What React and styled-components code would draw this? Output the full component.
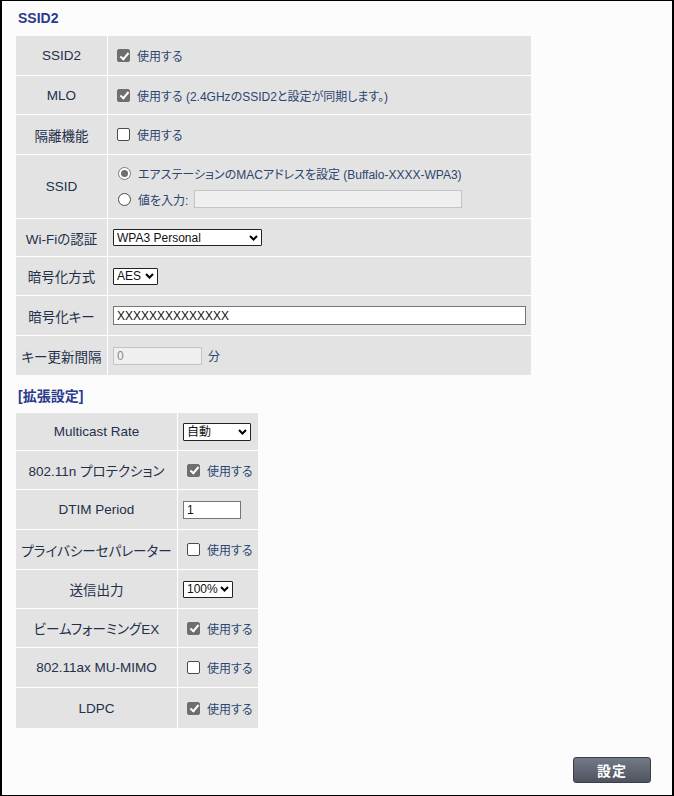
import React from 'react';
import styled, { createGlobalStyle } from 'styled-components';

const Global = createGlobalStyle`
  html, body { margin: 0; padding: 0; background: #fcfcfc; }
  body {
    font-family: "Liberation Sans", "Noto Sans CJK JP", sans-serif;
    font-feature-settings: "palt";
  }
`;

const Frame = styled.div`
  box-sizing: border-box;
  min-height: 796px;
  width: 674px;
  border: 1px solid #000;
  border-left-width: 2px;
  border-right-width: 2px;
  background: #fcfcfc;
  padding: 8px 19px 12px 14px;
`;

const Heading = styled.h2`
  margin: ${p => p.$top || 0}px 0 ${p => p.$bottom || 0}px 2px;
  font-size: 14px;
  line-height: 18px;
  font-weight: bold;
  color: #2a3b8c;
`;

const Table = styled.table`
  width: ${p => p.$width}px;
  border-collapse: separate;
  border-spacing: 0;
  background: #e3e3e3;
`;

const Label = styled.td`
  box-sizing: border-box;
  width: ${p => p.$width}px;
  height: ${p => p.$height || 40}px;
  border-right: 1px solid #fff;
  border-bottom: 1px solid #fff;
  text-align: center;
  vertical-align: middle;
  font-size: 13.5px;
  font-weight: normal;
  color: #23304a;
  padding: 0;
  white-space: nowrap;
  tr:last-child > & { border-bottom: none; }
`;

const Value = styled.td`
  border-bottom: 1px solid #fff;
  padding: 0 5px;
  vertical-align: middle;
  font-size: 12px;
  color: #2c4670;
  tr:last-child > & { border-bottom: none; }
`;

const Line = styled.div`
  display: flex;
  align-items: center;
  gap: 6px;
  white-space: nowrap;
`;

const Stack = styled.div`
  display: flex;
  flex-direction: column;
  gap: 8px;
`;

const Check = styled.input.attrs({ type: 'checkbox', readOnly: true })`
  appearance: none;
  position: relative;
  box-sizing: border-box;
  width: 13px;
  height: 13px;
  margin: 0 1px 0 4px;
  border-radius: 2px;
  border: 1px solid ${p => (p.checked ? '#6e6e6e' : '#4a4a4a')};
  background: ${p => (p.checked ? '#6e6e6e' : '#fff')};
  flex: none;
  &::after {
    content: '';
    display: ${p => (p.checked ? 'block' : 'none')};
    position: absolute;
    left: 3.5px;
    top: 0.5px;
    width: 3px;
    height: 7px;
    border: solid #fff;
    border-width: 0 2px 2px 0;
    transform: rotate(40deg);
  }
`;

const Radio = styled.input.attrs({ type: 'radio', readOnly: true })`
  appearance: none;
  position: relative;
  box-sizing: border-box;
  width: 13px;
  height: 13px;
  margin: 0 1px 0 5px;
  border-radius: 50%;
  border: 1px solid ${p => (p.checked ? '#7a7a7a' : '#4a4a4a')};
  background: #fff;
  flex: none;
  &::after {
    content: '';
    display: ${p => (p.checked ? 'block' : 'none')};
    position: absolute;
    left: 2px;
    top: 2px;
    width: 7px;
    height: 7px;
    border-radius: 50%;
    background: #6e6e6e;
  }
`;

const Text = styled.input.attrs({ type: 'text', readOnly: true })`
  box-sizing: border-box;
  width: ${p => p.$width}px;
  height: ${p => p.$height || 18}px;
  margin: 0;
  padding: 0 3px;
  font: 12px "Liberation Sans", sans-serif;
  color: ${p => (p.disabled ? '#8a8a8a' : '#111')};
  background: ${p => (p.disabled ? '#efefef' : '#fff')};
  border: 1px solid ${p => (p.disabled ? '#c4c4c4' : '#767676')};
  outline: none;
`;

const SelectBox = styled.span`
  position: relative;
  display: inline-flex;
  width: ${p => p.$width}px;
`;

const SelectField = styled.select`
  box-sizing: border-box;
  appearance: none;
  width: 100%;
  height: ${p => p.$height || 17}px;
  margin: 0;
  padding: 0 0 0 3px;
  font: 12px "Liberation Sans", "Noto Sans CJK JP", sans-serif;
  color: #111;
  background: #fff;
  border: 1px solid #222;
  border-radius: 1px;
  outline: none;
`;

const Chevron = styled.svg`
  position: absolute;
  right: 4px;
  top: 50%;
  margin-top: -3px;
  pointer-events: none;
`;

const Select = ({ width, height, value }) => (
  <SelectBox $width={width}>
    <SelectField $height={height} value={value} onChange={() => {}}>
      <option>{value}</option>
    </SelectField>
    <Chevron width="9" height="6" viewBox="0 0 9 6">
      <path d="M1 1 L4.5 4.5 L8 1" fill="none" stroke="#000" strokeWidth="2" />
    </Chevron>
  </SelectBox>
);

const Footer = styled.div`
  display: flex;
  justify-content: flex-end;
  margin-top: 29px;
  padding-right: 2px;
`;

const Button = styled.button`
  width: 78px;
  height: 26px;
  border: 1px solid #3c3f47;
  border-radius: 3px;
  background: linear-gradient(#747987, #4e535f);
  color: #fff;
  font: bold 14px "Noto Sans CJK JP", sans-serif;
  letter-spacing: 1px;
  cursor: pointer;
`;

const Use = ({ checked, children = '使用する' }) => (
  <Line>
    <Check checked={checked} />
    <span>{children}</span>
  </Line>
);

const advanced = [
  { label: 'Multicast Rate', h: 38, node: <Select width={68} height={18} value="自動" /> },
  { label: '802.11n プロテクション', h: 39, node: <Use checked /> },
  { label: 'DTIM Period', h: 40, node: <Text $width={58} value="1" /> },
  { label: 'プライバシーセパレーター', h: 40, node: <Use /> },
  { label: '送信出力', h: 39, node: <Select width={50} value="100%" /> },
  { label: 'ビームフォーミングEX', h: 39, node: <Use checked /> },
  { label: '802.11ax MU-MIMO', h: 40, node: <Use /> },
  { label: 'LDPC', h: 40, node: <Use checked /> },
];

export default function App() {
  return (
    <Frame>
      <Global />
      <Heading $bottom={9}>SSID2</Heading>
      <Table $width={515}>
        <tbody>
          <tr>
            <Label $width={93}>SSID2</Label>
            <Value><Use checked /></Value>
          </tr>
          <tr>
            <Label $width={93} $height={39}>MLO</Label>
            <Value><Use checked>使用する (2.4GHzのSSID2と設定が同期します。)</Use></Value>
          </tr>
          <tr>
            <Label $width={93}>隔離機能</Label>
            <Value><Use /></Value>
          </tr>
          <tr>
            <Label $width={93} $height={64}>SSID</Label>
            <Value>
              <Stack>
                <Line>
                  <Radio checked />
                  <span>エアステーションのMACアドレスを設定 (Buffalo-XXXX-WPA3)</span>
                </Line>
                <Line>
                  <Radio />
                  <span>値を入力:</span>
                  <Text $width={268} disabled value="" />
                </Line>
              </Stack>
            </Value>
          </tr>
          <tr>
            <Label $width={93} $height={38}>Wi-Fiの認証</Label>
            <Value><Select width={149} value="WPA3 Personal" /></Value>
          </tr>
          <tr>
            <Label $width={93} $height={39}>暗号化方式</Label>
            <Value><Select width={45} value="AES" /></Value>
          </tr>
          <tr>
            <Label $width={93}>暗号化キー</Label>
            <Value><Text $width={413} $height={19} value="XXXXXXXXXXXXXX" /></Value>
          </tr>
          <tr>
            <Label $width={93} $height={39}>キー更新間隔</Label>
            <Value>
              <Line>
                <Text $width={89} disabled value="0" />
                <span>分</span>
              </Line>
            </Value>
          </tr>
        </tbody>
      </Table>

      <Heading $top={12} $bottom={8}>[拡張設定]</Heading>
      <Table $width={242}>
        <tbody>
          {advanced.map(row => (
            <tr key={row.label}>
              <Label $width={162} $height={row.h}>{row.label}</Label>
              <Value>{row.node}</Value>
            </tr>
          ))}
        </tbody>
      </Table>

      <Footer>
        <Button>設定</Button>
      </Footer>
    </Frame>
  );
}
